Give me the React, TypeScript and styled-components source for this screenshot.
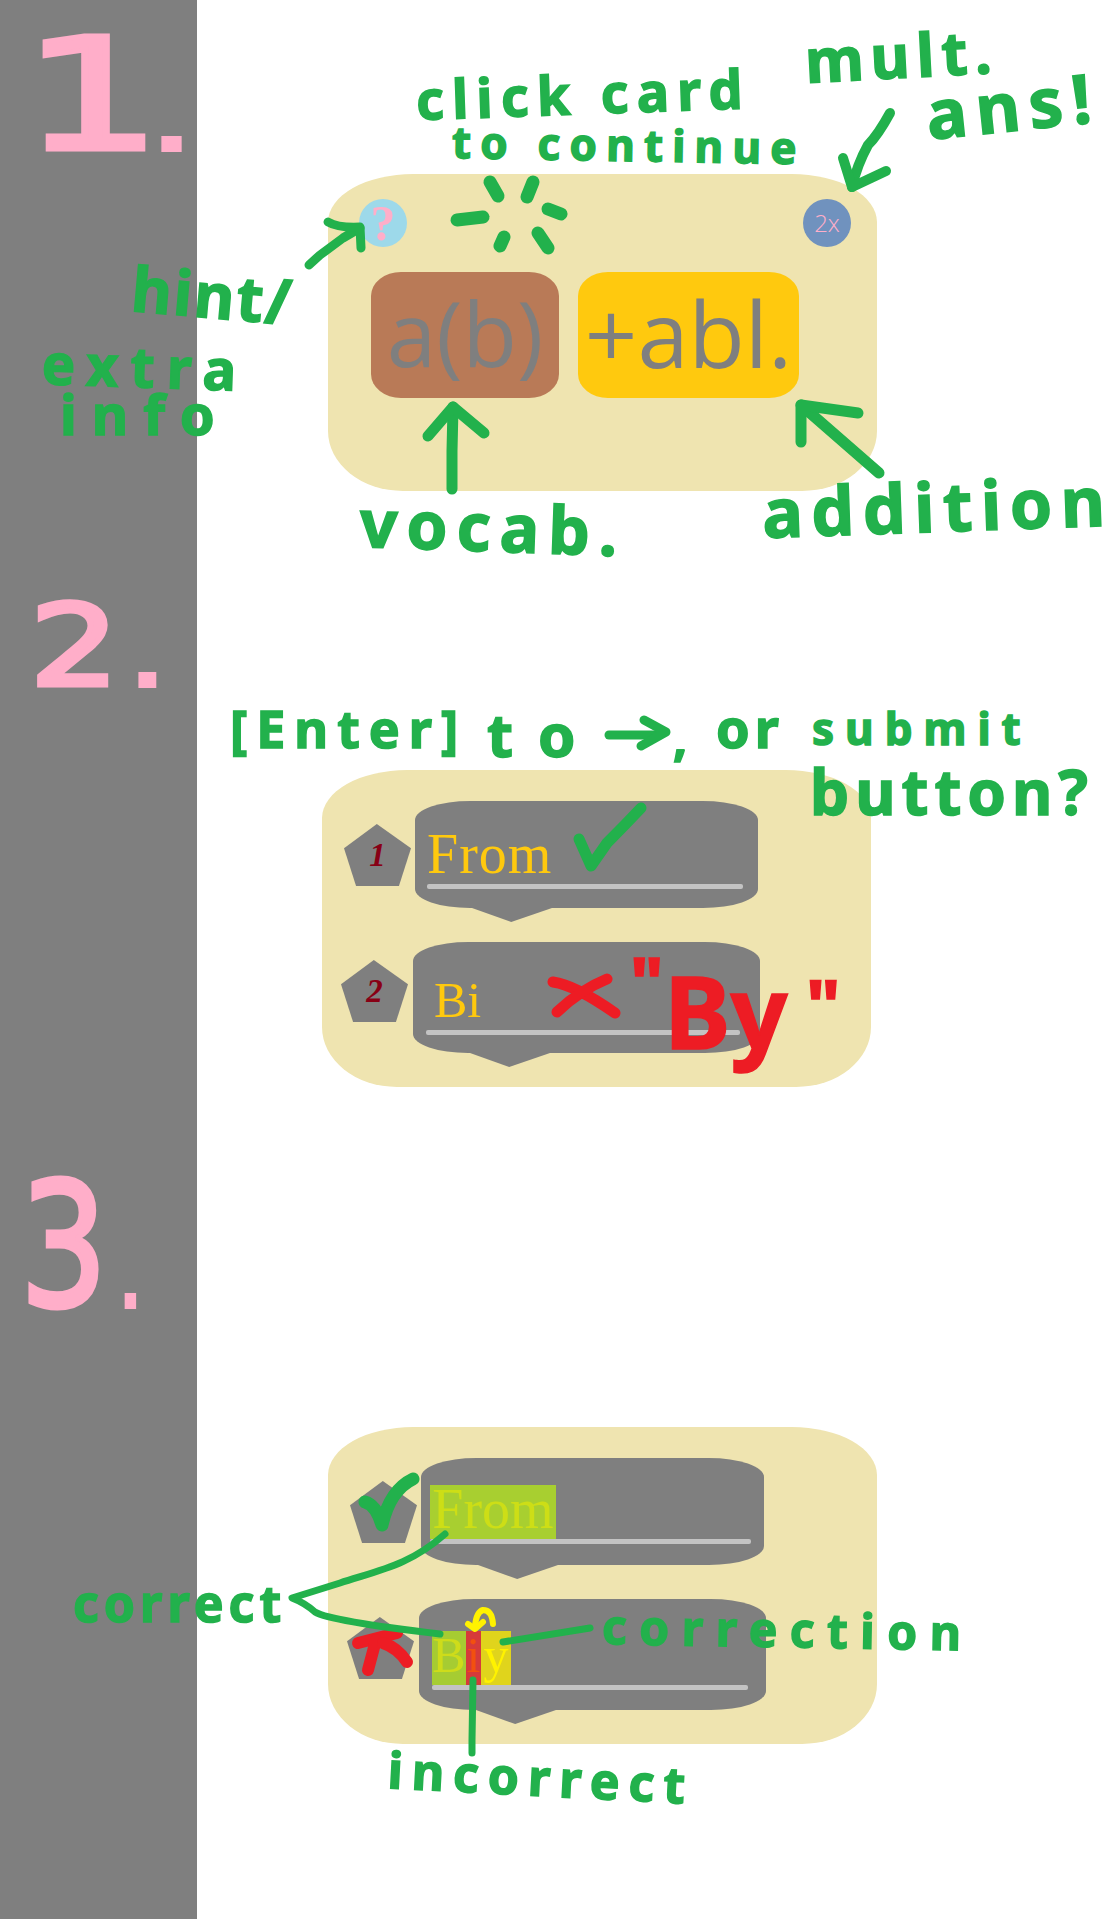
import React from "react";
import styled, { createGlobalStyle } from "styled-components";

const GREEN = "#22b14c";
const RED = "#ed1c24";
const YELLOW = "#fff200";
const PINK = "#ffaec9";
const GREY = "#7f7f7f";

const Global = createGlobalStyle`
  html, body { margin: 0; padding: 0; background: #fff; }
  * { box-sizing: border-box; }
`;

const Page = styled.main`
  position: relative;
  display: flex;
  width: 1116px;
  height: 1919px;
  overflow: hidden;
  background: #fff;
`;

const Sidebar = styled.aside`
  flex: 0 0 197px;
  display: flex;
  flex-direction: column;
  background: ${GREY};
`;

const Num = styled.div<{ $mt: number; $ml: number; $size: number; $sx: number }>`
  margin: ${(p) => p.$mt}px 0 0 ${(p) => p.$ml}px;
  font: 400 ${(p) => p.$size}px/1 "DejaVu Sans", sans-serif;
  color: ${PINK};
  -webkit-text-stroke: 5px ${PINK};
  white-space: nowrap;
  transform: scaleX(${(p) => p.$sx});
  transform-origin: left center;
`;

const Dot = styled.span<{ $dx: number }>`
  margin-left: ${(p) => p.$dx}px;
  font-size: 80px;
  -webkit-text-stroke: 6px ${PINK};
`;

const Canvas = styled.div`
  flex: 1;
  display: flex;
  flex-direction: column;
`;

const Card = styled.section<{ $ml: number; $mt: number }>`
  width: 549px;
  height: 317px;
  margin: ${(p) => p.$mt}px 0 0 ${(p) => p.$ml}px;
  background: #efe4b0;
  border-radius: 85px 85px 75px 75px / 48px 48px 60px 60px;
`;

const TopRow = styled.div`
  display: flex;
  justify-content: space-between;
  padding: 25px 26px 0 31px;
`;

const Circle = styled.div<{ $bg: string }>`
  width: 48px;
  height: 48px;
  border-radius: 50%;
  display: flex;
  align-items: center;
  justify-content: center;
  color: ${PINK};
  background: ${(p) => p.$bg};
`;

const HintMark = styled.span`
  font: 700 50px/1 "Liberation Serif", serif;
`;

const Mult = styled.span`
  font: 300 24px/1 "Open Sans", sans-serif;
`;

const Tiles = styled.div`
  display: flex;
  gap: 19px;
  margin: 25px 0 0 43px;
`;

const Tile = styled.div<{ $bg: string; $w: number; $size: number }>`
  width: ${(p) => p.$w}px;
  height: 126px;
  padding-bottom: 5px;
  display: flex;
  align-items: center;
  justify-content: center;
  background: ${(p) => p.$bg};
  border-radius: 30px / 24px;
  color: ${GREY};
  font: 400 ${(p) => p.$size}px/1 "Open Sans", sans-serif;
`;

const List = styled.div`
  display: flex;
  flex-direction: column;
  gap: 34px;
  padding-top: 31px;
`;

const Row = styled.div<{ $ml: number; $gap: number }>`
  display: flex;
  align-items: flex-start;
  gap: ${(p) => p.$gap}px;
  margin-left: ${(p) => p.$ml}px;
`;

const Pentagon = styled.div<{ $mt: number }>`
  flex: 0 0 67px;
  height: 62px;
  margin-top: ${(p) => p.$mt}px;
  display: flex;
  align-items: center;
  justify-content: center;
  background: ${GREY};
  clip-path: polygon(49% 0, 100% 39%, 82% 100%, 18% 100%, 0 39%);
  color: #880015;
  font: italic 700 33px/1 "Liberation Serif", serif;
`;

const Bubble = styled.div<{ $w: number; $h: number; $pt: number; $pl: number; $pr: number }>`
  position: relative;
  display: flex;
  flex-direction: column;
  width: ${(p) => p.$w}px;
  height: ${(p) => p.$h}px;
  padding: ${(p) => p.$pt}px ${(p) => p.$pr}px 0 ${(p) => p.$pl}px;
  background: ${GREY};
  border-radius: 55px / 19px;
  &::after {
    content: "";
    position: absolute;
    top: 100%;
    left: 57px;
    width: 80px;
    height: 14px;
    background: ${GREY};
    clip-path: polygon(0 0, 100% 0, 49% 100%);
  }
`;

const Word = styled.div`
  display: flex;
  height: 54px;
`;

const Seg = styled.span<{ $bg?: string; $c: string; $w?: number; $size: number; $pl?: number; $ls?: number }>`
  height: 54px;
  ${(p) => (p.$w ? `width: ${p.$w}px; text-align: center;` : "")}
  padding-left: ${(p) => p.$pl ?? 0}px;
  background: ${(p) => p.$bg ?? "transparent"};
  color: ${(p) => p.$c};
  letter-spacing: ${(p) => p.$ls ?? 0}px;
  font-family: "Liberation Serif", serif;
  font-size: ${(p) => p.$size}px;
  line-height: 49px;
`;

const Underline = styled.div`
  height: 5px;
  border-radius: 2px;
  background: #c3c3c3;
`;

const Ink = styled.svg`
  position: absolute;
  inset: 0;
  width: 1116px;
  height: 1919px;
  pointer-events: none;
`;

const Note = styled.span<{ $x: number; $y: number; $size: number; $ls: number; $rot?: number; $c?: string }>`
  position: absolute;
  left: ${(p) => p.$x}px;
  top: ${(p) => p.$y}px;
  font: 700 ${(p) => p.$size}px/1 "Noto Sans", sans-serif;
  letter-spacing: ${(p) => p.$ls}px;
  color: ${(p) => p.$c ?? GREEN};
  -webkit-text-stroke: 1.5px ${(p) => p.$c ?? GREEN};
  white-space: nowrap;
  transform: rotate(${(p) => p.$rot ?? 0}deg);
  transform-origin: left center;
`;

const Stroke = styled.path.attrs({ fill: "none", strokeLinecap: "round", strokeLinejoin: "round" })``;

const strokes: [string, string, number][] = [
  // section 1: sparkle
  ["M490 182 L498 196", GREEN, 13],
  ["M533 182 L527 197", GREEN, 13],
  ["M548 209 L561 214", GREEN, 13],
  ["M538 233 L548 248", GREEN, 13],
  ["M504 237 L500 246", GREEN, 13],
  ["M457 220 L483 217", GREEN, 13],
  // hint arrow
  ["M309 265 L320 255 L343 238 L360 228", GREEN, 9],
  ["M328 222 Q338 228 360 227 L361 248", GREEN, 9],
  // mult arrow
  ["M890 113 Q878 135 868 145 Q857 165 852 187", GREEN, 10],
  ["M843 158 L852 187 L886 171", GREEN, 10],
  // vocab arrow
  ["M452 489 L452 451 L453 407", GREEN, 11],
  ["M428 436 L453 407 L484 433", GREEN, 11],
  // addition arrow
  ["M879 473 L801 405", GREEN, 11],
  ["M801 442 L801 405 L858 413", GREEN, 11],
  // section 2
  ["M609 735 L659 735", GREEN, 9],
  ["M644 720 L666 732 L641 746", GREEN, 9],
  ["M579 839 L591 866 L607 843 Q625 825 641 808", GREEN, 11],
  ["M553 982 Q575 985 615 1013", RED, 11],
  ["M607 979 Q580 990 557 1012", RED, 11],
  // section 3
  ["M365 1502 Q376 1505 382 1525 Q390 1490 413 1479", GREEN, 13],
  ["M358 1643 L397 1633", RED, 12],
  ["M376 1640 Q372 1655 368 1670", RED, 12],
  ["M383 1643 Q398 1648 407 1662", RED, 12],
  ["M445 1534 C410 1565 380 1570 340 1583 L292 1598 Q305 1603 315 1612 Q330 1621 440 1634", GREEN, 7],
  ["M503 1642 Q540 1636 590 1628", GREEN, 7],
  ["M473 1680 L472 1740 L472 1753", GREEN, 7],
  ["M493 1624 Q492 1610 483 1610 Q476 1612 475 1627", YELLOW, 6],
  ["M468 1624 L475 1629 L483 1622", YELLOW, 6],
];

function Entry(props: {
  first: boolean;
  pt: number;
  pl: number;
  pr: number;
  n?: string;
  children: React.ReactNode;
}) {
  const { first, pt, pl, pr, n, children } = props;
  return (
    <Row $ml={first ? 22 : 19} $gap={first ? 4 : 5}>
      <Pentagon $mt={first ? 23 : 18}>{n}</Pentagon>
      <Bubble $w={first ? 343 : 347} $h={first ? 107 : 111} $pt={pt} $pl={pl} $pr={pr}>
        <Word>{children}</Word>
        <Underline />
      </Bubble>
    </Row>
  );
}

export default function App() {
  return (
    <Page>
      <Global />
      <Sidebar>
        <Num $mt={18} $ml={22} $size={155} $sx={1.42}>1<Dot $dx={-6}>.</Dot></Num>
        <Num $mt={417} $ml={30} $size={112} $sx={1.25}>2<Dot $dx={10}>.</Dot></Num>
        <Num $mt={459} $ml={20} $size={172} $sx={0.8}>3<Dot $dx={16}>.</Dot></Num>
      </Sidebar>
      <Canvas>
        <Card $ml={131} $mt={174}>
          <TopRow>
            <Circle $bg="#9dd9ea"><HintMark>?</HintMark></Circle>
            <Circle $bg="#7092be"><Mult>2x</Mult></Circle>
          </TopRow>
          <Tiles>
            <Tile $bg="#b97a57" $w={188} $size={89}>a(b)</Tile>
            <Tile $bg="#ffc90e" $w={221} $size={92}>+abl.</Tile>
          </Tiles>
        </Card>
        <Card $ml={125} $mt={279}>
          <List>
            <Entry first n="1" pt={29} pl={12} pr={15}>
              <Seg $c="#ffc90e" $size={56} $ls={1}>From</Seg>
            </Entry>
            <Entry first={false} n="2" pt={34} pl={13} pr={20}>
              <Seg $c="#ffc90e" $size={50} $pl={8}>Bi</Seg>
            </Entry>
          </List>
        </Card>
        <Card $ml={131} $mt={340}>
          <List>
            <Entry first pt={27} pl={9} pr={13}>
              <Seg $bg="#a8cf30" $c="#cdde16" $size={56} $w={126}>From</Seg>
            </Entry>
            <Entry first={false} pt={32} pl={13} pr={18}>
              <Seg $bg="#a6cc32" $c="#cedc1a" $size={50} $w={34}>B</Seg>
              <Seg $bg="#d63a3a" $c="#f2500f" $size={50} $w={15}>i</Seg>
              <Seg $bg="#e0d41c" $c={YELLOW} $size={50} $w={30}>y</Seg>
            </Entry>
          </List>
        </Card>
      </Canvas>

      <Ink viewBox="0 0 1116 1919">
        {strokes.map(([d, c, w], i) => (
          <Stroke key={i} d={d} stroke={c} strokeWidth={w} />
        ))}
      </Ink>

      <Note $x={416} $y={72} $size={54} $ls={8.2} $rot={-2}>click card</Note>
      <Note $x={452} $y={119} $size={44} $ls={9.2} $rot={1}>to continue</Note>
      <Note $x={805} $y={30} $size={60} $ls={7} $rot={-3}>mult.</Note>
      <Note $x={926} $y={80} $size={68} $ls={9} $rot={-6}>ans!</Note>
      <Note $x={132} $y={256} $size={62} $ls={2} $rot={5}>hint/</Note>
      <Note $x={42} $y={334} $size={56} $ls={12} $rot={2}>extra</Note>
      <Note $x={60} $y={385} $size={56} $ls={15}>info</Note>
      <Note $x={360} $y={488} $size={66} $ls={9} $rot={2}>vocab.</Note>
      <Note $x={762} $y={478} $size={68} $ls={8.5} $rot={-2}>addition</Note>

      <Note $x={230} $y={702} $size={52} $ls={9}>[Enter]</Note>
      <Note $x={487} $y={704} $size={60} $ls={25}>to</Note>
      <Note $x={673} $y={712} $size={50} $ls={0}>,</Note>
      <Note $x={716} $y={700} $size={54} $ls={5}>or</Note>
      <Note $x={812} $y={706} $size={44} $ls={11}>submit</Note>
      <Note $x={810} $y={760} $size={62} $ls={6}>button?</Note>

      <Note $x={630} $y={946} $size={70} $ls={0} $c={RED}>"</Note>
      <Note $x={664} $y={960} $size={100} $ls={0} $c={RED}>By</Note>
      <Note $x={806} $y={968} $size={72} $ls={0} $c={RED}>"</Note>

      <Note $x={73} $y={1578} $size={50} $ls={5}>correct</Note>
      <Note $x={602} $y={1602} $size={48} $ls={12.5} $rot={1}>correction</Note>
      <Note $x={388} $y={1744} $size={50} $ls={9} $rot={3}>incorrect</Note>
    </Page>
  );
}
